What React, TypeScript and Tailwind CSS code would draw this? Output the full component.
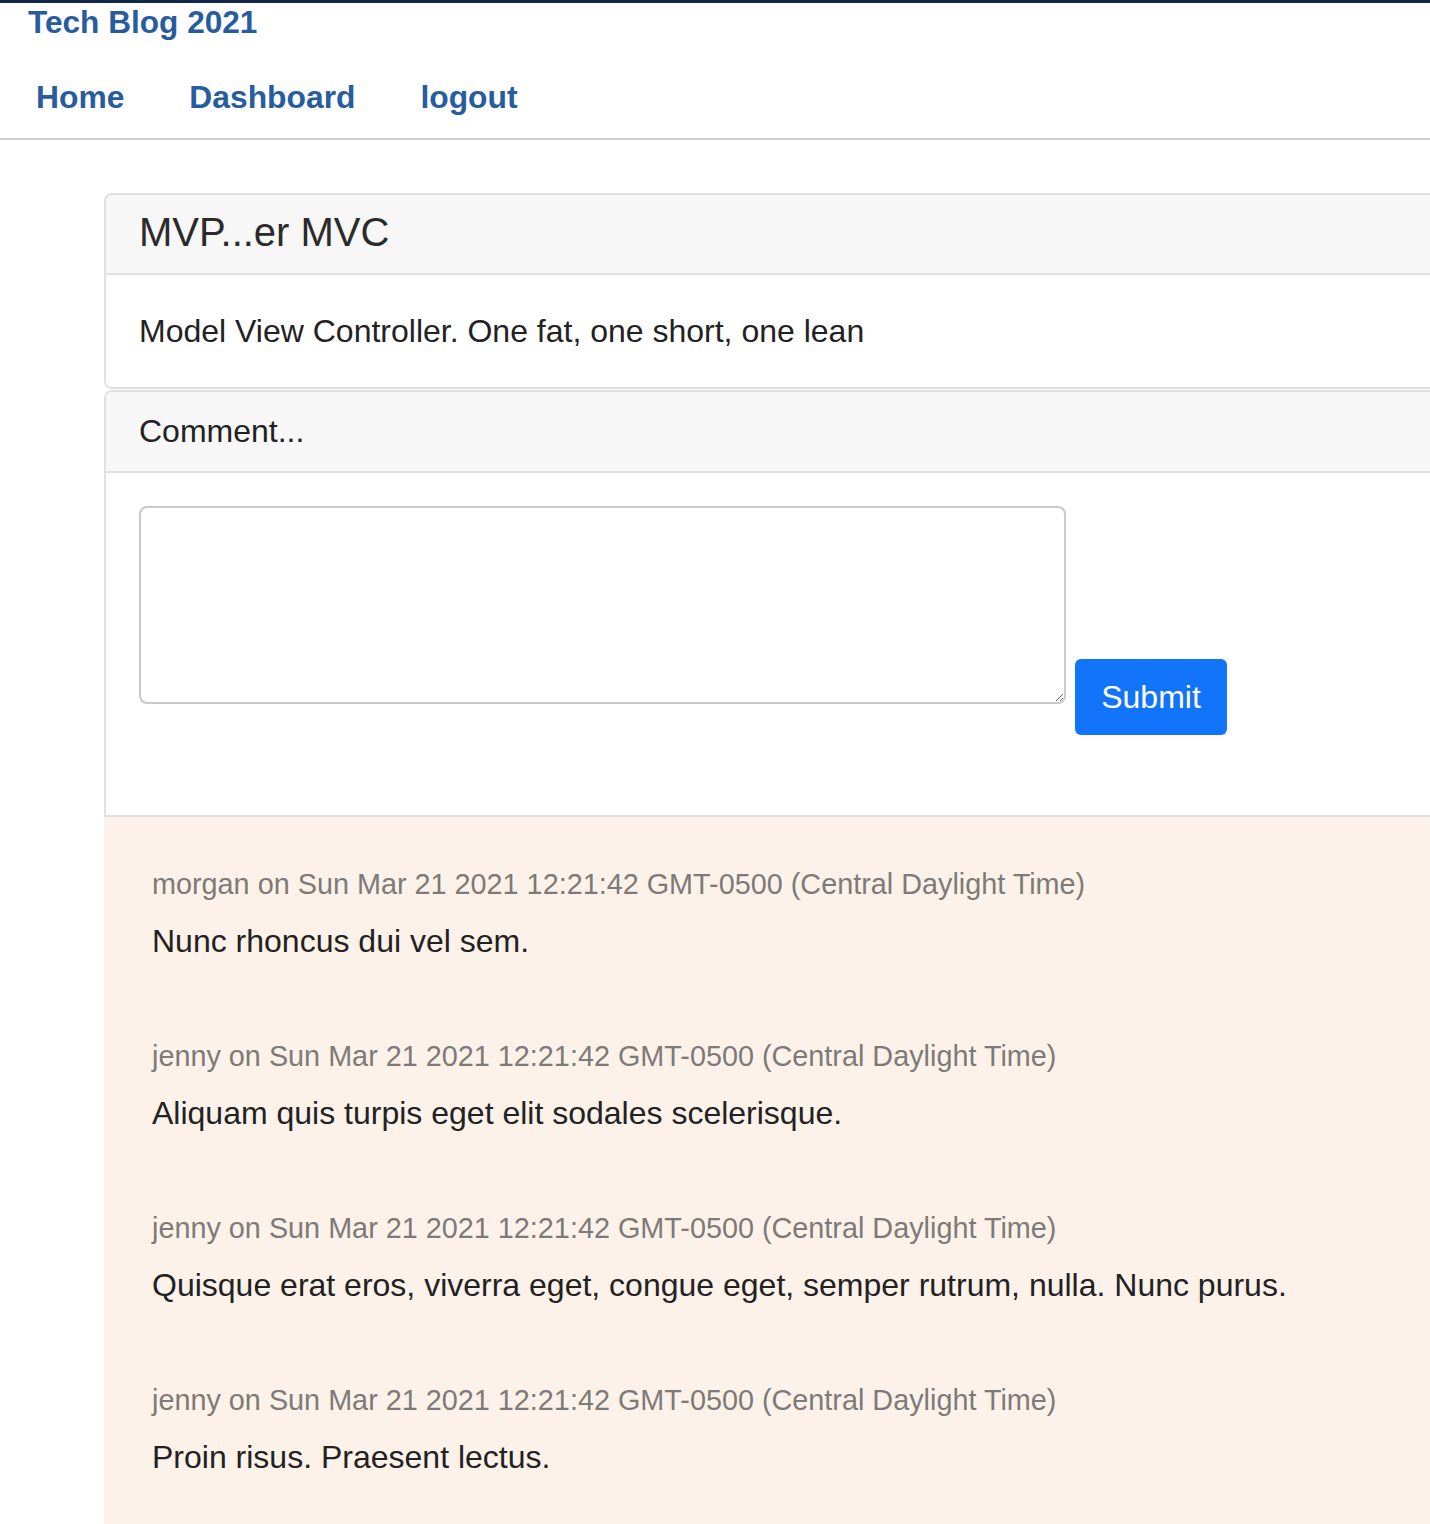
const comments = [
  {
    user: "morgan",
    date: "Sun Mar 21 2021 12:21:42 GMT-0500 (Central Daylight Time)",
    text: "Nunc rhoncus dui vel sem.",
  },
  {
    user: "jenny",
    date: "Sun Mar 21 2021 12:21:42 GMT-0500 (Central Daylight Time)",
    text: "Aliquam quis turpis eget elit sodales scelerisque.",
  },
  {
    user: "jenny",
    date: "Sun Mar 21 2021 12:21:42 GMT-0500 (Central Daylight Time)",
    text: "Quisque erat eros, viverra eget, congue eget, semper rutrum, nulla. Nunc purus.",
  },
  {
    user: "jenny",
    date: "Sun Mar 21 2021 12:21:42 GMT-0500 (Central Daylight Time)",
    text: "Proin risus. Praesent lectus.",
  },
];

const Header = () => {
  return (
    <header className="border-t-[3px] border-t-[#13294b] border-b-2 border-b-[#cfcfcf]">
      <h1 className="mt-px pl-[28px] text-[31.6px] leading-[36px] font-bold text-[#275d9e]">
        Tech Blog 2021
      </h1>
      <nav className="flex gap-[65px] pl-[36px] pt-[37px] pb-[21px] text-[31.8px] leading-[40px] font-bold text-[#275d9e]">
        <a href="#">Home</a>
        <a href="#">Dashboard</a>
        <a href="#">logout</a>
      </nav>
    </header>
  );
};

const PostCard = () => {
  return (
    <div className="rounded-lg border-2 border-[#e0e0e0] overflow-hidden">
      <div className="h-[80px] flex items-center pb-[4px] px-[33px] bg-[#f7f7f7] border-b-2 border-[#e0e0e0]">
        <h2 className="text-[40px] leading-[48px] text-[#2b2b2b]">MVP...er MVC</h2>
      </div>
      <div className="h-[112px] flex items-center px-[33px] bg-white">
        <p className="text-[32px] leading-[40px] text-[#222]">
          Model View Controller. One fat, one short, one lean
        </p>
      </div>
    </div>
  );
};

const CommentForm = () => {
  return (
    <div className="mt-px rounded-t-lg border-2 border-[#e0e0e0] overflow-hidden">
      <div className="h-[81px] flex items-center pb-[2px] px-[33px] bg-[#f7f7f7] border-b-2 border-[#e0e0e0]">
        <h3 className="text-[32px] leading-[40px] text-[#222]">Comment...</h3>
      </div>
      <div className="h-[342px] flex items-start gap-[9px] pl-[33px] pt-[33px] bg-white">
        <textarea className="w-[927px] h-[198px] rounded-lg border-2 border-[#c9c9c9] bg-white p-2 text-[28px] outline-none" />
        <button className="mt-[153px] h-[76px] w-[152px] rounded-md bg-[#1174fb] text-[32px] text-white">
          Submit
        </button>
      </div>
    </div>
  );
};

export default function App() {
  return (
    <div className="w-[1430px] min-h-[1524px] overflow-hidden bg-white font-['Liberation_Sans',Arial,sans-serif]">
      <Header />
      <main className="ml-[104px] mt-[53px] w-[1400px]">
        <PostCard />
        <CommentForm />
        <section className="bg-[#fdf2ea] pt-[47px] pb-[60px] pl-[48px] flex flex-col gap-[75px]">
          {comments.map((c, i) => (
            <div key={i} className="flex flex-col gap-[17px]">
              <p className="text-[28.8px] leading-[40px] text-[#7d7a77]">
                {c.user} on {c.date}
              </p>
              <p className="text-[32px] leading-[40px] text-[#222]">{c.text}</p>
            </div>
          ))}
        </section>
      </main>
    </div>
  );
}
